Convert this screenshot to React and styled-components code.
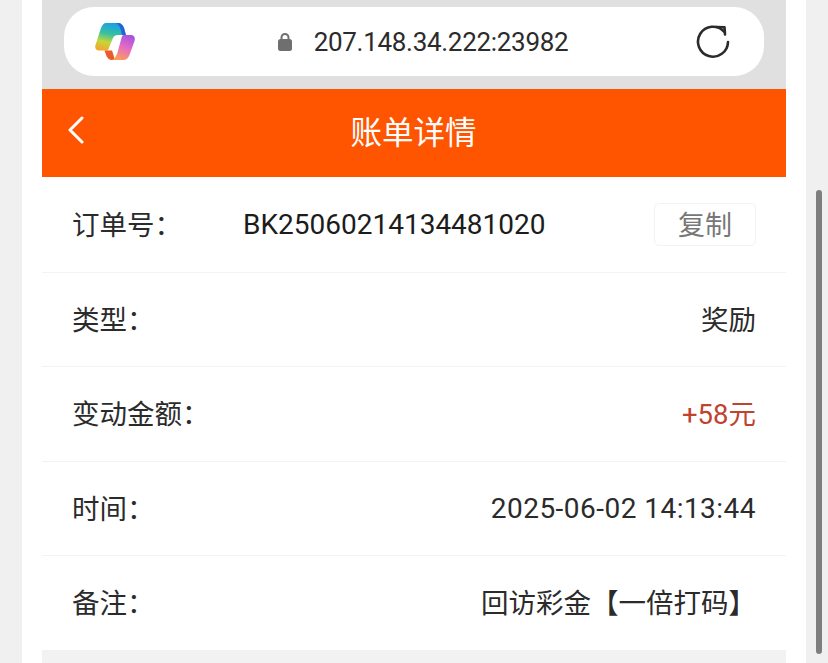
import React from 'react';
import styled, { createGlobalStyle } from 'styled-components';

const GlobalStyle = createGlobalStyle`
  html, body {
    margin: 0;
    height: 100%;
    overflow: hidden;
    background: #f0f0f0;
  }
  body {
    font-family: Roboto, "Noto Sans CJK SC", sans-serif;
  }
`;

const Page = styled.div`
  width: 828px;
  height: 663px;
  padding: 0 22px;
  box-sizing: border-box;
  overflow: hidden;
  background: #f0f0f0;
`;

const Sheet = styled.div`
  height: 663px;
  padding: 0 20px;
  background: #fff;
`;

const BrowserBar = styled.div`
  height: 89px;
  padding: 7px 22px 13px;
  box-sizing: border-box;
  background: #e0e0e0;
`;

const AddressPill = styled.div`
  height: 69px;
  padding: 0 34px 0 31px;
  display: flex;
  align-items: center;
  justify-content: space-between;
  border-radius: 30px;
  background: #fff;
`;

const Address = styled.div`
  display: flex;
  align-items: center;
  gap: 21px;
  margin-left: 14px;
  font-size: 26px;
  letter-spacing: -0.3px;
  color: #2b2b2b;
`;

const Header = styled.div`
  height: 88px;
  padding: 0 26px 6px 25px;
  box-sizing: border-box;
  display: flex;
  align-items: center;
  background: #ff5500;
  color: #fff;
`;

const Title = styled.div`
  flex: 1;
  margin-right: 18px;
  text-align: center;
  font-size: 31.5px;
  font-family: "Noto Sans CJK SC", sans-serif;
`;

const List = styled.div`
  padding-top: 1px;
`;

const Row = styled.div`
  height: ${p => (p.$last ? '93.5px' : '94.5px')};
  box-sizing: border-box;
  padding: 0 30px;
  display: flex;
  align-items: center;
  justify-content: space-between;
  border-bottom: 1.5px solid ${p => (p.$last ? 'transparent' : '#f3f3f3')};
  font-size: 28px;
  color: #2b2b2b;
`;

const Label = styled.span`
  margin-bottom: 3px;
  font-size: 27.5px;
  font-family: "Noto Sans CJK SC", sans-serif;
`;

const OrderLabel = styled(Label)`
  width: 171px;
  flex: none;
`;

const Value = styled.span`
  color: ${p => p.$color || '#2b2b2b'};
  letter-spacing: ${p => (p.$wide ? '0.47px' : '0')};
  margin-bottom: ${p => (p.$wide ? '0' : '3px')};
  font-size: ${p => (p.$wide ? '28px' : '27.5px')};
`;

const OrderNo = styled.span`
  flex: 1;
  color: #1c1c1c;
`;

const CopyButton = styled.button`
  width: 102px;
  height: 43px;
  padding: 0 0 2px;
  border: 1px solid #f2f2f2;
  border-radius: 5px;
  background: #fff;
  color: #777;
  font-size: 27px;
  font-family: "Noto Sans CJK SC", sans-serif;
`;

const Footer = styled.div`
  height: 13px;
  background: #f2f2f2;
`;

const Scrollbar = styled.div`
  position: absolute;
  left: 816px;
  top: 190px;
  width: 6px;
  height: 464px;
  border-radius: 3px;
  background: #7e7e7e;
`;

const CopilotLogo = () => (
  <svg width="40" height="37" viewBox="0 0 40 37">
    <defs>
      <linearGradient id="copilotLeft" x1="0.55" y1="0" x2="0.3" y2="1">
        <stop offset="0" stopColor="#1a9fe8" />
        <stop offset="0.4" stopColor="#38c0a0" />
        <stop offset="0.7" stopColor="#c4d83a" />
        <stop offset="1" stopColor="#f6a52c" />
      </linearGradient>
      <linearGradient id="copilotRight" x1="0.75" y1="0" x2="0.35" y2="1">
        <stop offset="0" stopColor="#a652e2" />
        <stop offset="0.5" stopColor="#e56cc4" />
        <stop offset="1" stopColor="#fb9c58" />
      </linearGradient>
    </defs>
    <path d="M11 0 H23 C26 0 28 2 29 5 L31 12 H23 C20 12 18.500 13.500 17.500 16 L13.500 26 C13 27 12 27.500 11 27.500 H4 C1 27.500 -0.500 25 0.500 22 L6 5 C7 2 9 0 11 0 Z" fill="url(#copilotLeft)" />
    <path d="M21 0 H23 C26 0 28 2 29 5 L31 12 H27 C26 7 25 2 21 0 Z" fill="#2564d4" />
    <path d="M9.500 27.500 H17 L20 37 H17 C14 37 12.500 35 11.500 33 Z" fill="#ea5a2c" />
    <path d="M28 12 H36 C39 12 40.500 14.500 39.500 18 L34.500 32 C33.500 35 31 37 28 37 H17 C19.500 36 21 33.500 22 31 L26.500 15 C27 13 27.500 12.500 28 12 Z" fill="url(#copilotRight)" />
  </svg>
);

const LockIcon = () => (
  <svg width="16" height="20" viewBox="0 0 16 20">
    <path d="M4.500 8 V5.500 a3.500 3.500 0 0 1 7 0 V8" fill="none" stroke="#6f6f6f" strokeWidth="2" />
    <rect x="1" y="7" width="14" height="12" rx="2.500" fill="#6f6f6f" />
  </svg>
);

const ReloadIcon = () => (
  <svg width="34" height="34" viewBox="0 0 34 34" fill="none" stroke="#2b2b2b" strokeWidth="2.600" strokeLinecap="round" strokeLinejoin="round">
    <path d="M28 6.500 A15 15 0 1 0 32 17" />
    <path d="M20.500 2 L28.500 2.200 L29 9.500" />
  </svg>
);

const BackIcon = () => (
  <svg width="18" height="28" viewBox="0 0 18 28" fill="none" stroke="#fff" strokeWidth="3" strokeLinecap="round" strokeLinejoin="round">
    <path d="M15 2 L3 14 L15 26" />
  </svg>
);

const rows = [
  { label: '类型：', value: '奖励' },
  { label: '变动金额：', value: '+58元', color: '#c0432f' },
  { label: '时间：', value: '2025-06-02 14:13:44', wide: true },
  { label: '备注：', value: '回访彩金【一倍打码】', last: true },
];

export default function App() {
  return (
    <Page>
      <GlobalStyle />
      <Sheet>
        <BrowserBar>
          <AddressPill>
            <CopilotLogo />
            <Address>
              <LockIcon />
              <span>207.148.34.222:23982</span>
            </Address>
            <ReloadIcon />
          </AddressPill>
        </BrowserBar>
        <Header>
          <BackIcon />
          <Title>账单详情</Title>
        </Header>
        <List>
          <Row>
            <OrderLabel>订单号：</OrderLabel>
            <OrderNo>BK25060214134481020</OrderNo>
            <CopyButton>复制</CopyButton>
          </Row>
          {rows.map(r => (
            <Row key={r.label} $last={r.last}>
              <Label>{r.label}</Label>
              <Value $color={r.color} $wide={r.wide}>{r.value}</Value>
            </Row>
          ))}
        </List>
        <Footer />
      </Sheet>
      <Scrollbar />
    </Page>
  );
}
